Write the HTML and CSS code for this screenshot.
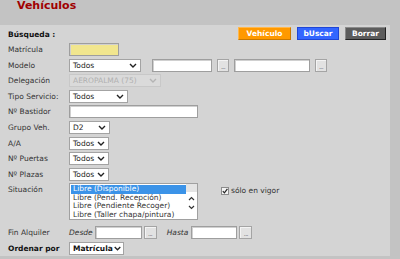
FILE: index.html
```html
<!DOCTYPE html>
<html lang="es">
<head>
<meta charset="UTF-8">
<meta name="viewport" content="width=device-width, initial-scale=1.0">
<title>Vehículos</title>
<link rel="stylesheet" href="styles.css">
</head>
<body>
  <h1>Vehículos</h1>
  <div class="panel">
    <div class="head">
      <span class="section">Búsqueda :</span>
      <div class="actions">
        <button class="btn btn-orange">Vehículo</button>
        <button class="btn btn-blue">bUscar</button>
        <button class="btn btn-dark">Borrar</button>
      </div>
    </div>

    <div class="form">
      <label>Matrícula</label>
      <div class="field"><input type="text" class="txt txt-yellow w-mat"></div>

      <label>Modelo</label>
      <div class="field">
        <span class="sel w-modelo"><span class="val">Todos</span><svg width="8" height="5" viewBox="0 0 8 5"><path d="M1 1 L4 4 L7 1" fill="none" stroke="#222" stroke-width="1.4"/></svg></span>
        <input type="text" class="txt w-m1 gap-l">
        <button class="dots">...</button>
        <input type="text" class="txt w-m2">
        <button class="dots">...</button>
      </div>

      <label>Delegación</label>
      <div class="field">
        <span class="sel off w-deleg"><span class="val">AEROPALMA (75)</span><svg width="8" height="5" viewBox="0 0 8 5"><path d="M1 1 L4 4 L7 1" fill="none" stroke="#b4b4b4" stroke-width="1.4"/></svg></span>
      </div>

      <label>Tipo Servicio:</label>
      <div class="field">
        <span class="sel w-tipo"><span class="val">Todos</span><svg width="8" height="5" viewBox="0 0 8 5"><path d="M1 1 L4 4 L7 1" fill="none" stroke="#222" stroke-width="1.4"/></svg></span>
      </div>

      <label>Nº Bastidor</label>
      <div class="field"><input type="text" class="txt w-bast"></div>

      <label>Grupo Veh.</label>
      <div class="field">
        <span class="sel w-grupo"><span class="val">D2</span><svg width="8" height="5" viewBox="0 0 8 5"><path d="M1 1 L4 4 L7 1" fill="none" stroke="#222" stroke-width="1.4"/></svg></span>
      </div>

      <label>A/A</label>
      <div class="field">
        <span class="sel w-small"><span class="val">Todos</span><svg width="8" height="5" viewBox="0 0 8 5"><path d="M1 1 L4 4 L7 1" fill="none" stroke="#222" stroke-width="1.4"/></svg></span>
      </div>

      <label>Nº Puertas</label>
      <div class="field">
        <span class="sel w-small"><span class="val">Todos</span><svg width="8" height="5" viewBox="0 0 8 5"><path d="M1 1 L4 4 L7 1" fill="none" stroke="#222" stroke-width="1.4"/></svg></span>
      </div>

      <label>Nº Plazas</label>
      <div class="field">
        <span class="sel w-small"><span class="val">Todos</span><svg width="8" height="5" viewBox="0 0 8 5"><path d="M1 1 L4 4 L7 1" fill="none" stroke="#222" stroke-width="1.4"/></svg></span>
      </div>

      <label class="top">Situación</label>
      <div class="field tall">
        <div class="list">
          <ul>
            <li class="on">Libre (Disponible)</li>
            <li>Libre (Pend. Recepción)</li>
            <li>Libre (Pendiente Recoger)</li>
            <li>Libre (Taller chapa/pintura)</li>
          </ul>
          <div class="scroll">
            <span class="thumb"></span>
            <svg width="7" height="5" viewBox="0 0 7 5"><path d="M1 4 L3.5 1.5 L6 4" fill="none" stroke="#333" stroke-width="1.2"/></svg>
            <svg width="7" height="5" viewBox="0 0 7 5"><path d="M1 1 L3.5 3.5 L6 1" fill="none" stroke="#333" stroke-width="1.2"/></svg>
          </div>
        </div>
        <label class="chk"><span class="box"><svg width="6" height="6" viewBox="0 0 6 6"><path d="M0.8 3.2 L2.4 4.8 L5.4 0.8" fill="none" stroke="#222" stroke-width="1.2"/></svg></span>sólo en vigor</label>
      </div>

      <label>Fin Alquiler</label>
      <div class="field">
        <em class="desde">Desde</em>
        <input type="text" class="txt w-date">
        <button class="dots dots-date">...</button>
        <em class="hasta">Hasta</em>
        <input type="text" class="txt w-date2">
        <button class="dots dots-date">...</button>
      </div>

      <label class="strong">Ordenar por</label>
      <div class="field">
        <span class="sel w-orden"><span class="val bold">Matrícula</span><svg width="7" height="5" viewBox="0 0 7 5"><path d="M0.7 1 L3.5 3.8 L6.3 1" fill="none" stroke="#222" stroke-width="1.3"/></svg></span>
      </div>
    </div>
  </div>
</body>
</html>
```

FILE: styles.css
```css
body {
  margin: 0;
  background-color: #c3c3c3;
  font-family: "DejaVu Sans", Verdana, sans-serif;
  font-size: 7.5px;
  color: #333;
}
h1 {
  margin: 0;
  height: 25px;
  padding-left: 17px;
  font-size: 11px;
  line-height: 11px;
  color: #a00000;
}
.panel {
  width: 390px;
  height: 231px;
  box-sizing: border-box;
  background-color: #d4d4d4;
  padding: 2px 4px 0 8px;
}
.head {
  display: flex;
  justify-content: space-between;
  align-items: center;
  height: 13px;
}
.section {
  font-weight: bold;
  color: #111;
  padding-top: 2px;
}
.actions {
  display: flex;
  gap: 6px;
}
.btn {
  height: 13px;
  padding: 0;
  font-family: "DejaVu Sans", Verdana, sans-serif;
  font-size: 7.5px;
  font-weight: bold;
  color: #fff;
  border: 1px solid;
  cursor: pointer;
}
.btn-orange {
  width: 53px;
  background-color: #ff9900;
  border-color: #ffb84d #c97800 #c97800 #ffb84d;
}
.btn-blue {
  width: 42px;
  background-color: #3366ff;
  border-color: #1f45d6;
}
.btn-dark {
  width: 41px;
  background-color: #5c5c5c;
  border-color: #8a8a8a #222 #222 #8a8a8a;
}

.form {
  display: grid;
  grid-template-columns: 61px auto;
  row-gap: 2.6px;
  align-items: center;
  margin-top: 3px;
}
.form label {
  color: #333;
}
.form label.top {
  align-self: start;
  padding-top: 2px;
}
.form label.strong {
  font-weight: bold;
  color: #111;
}
.field {
  display: flex;
  align-items: center;
  height: 13px;
}
.field.tall {
  height: 37px;
  align-items: flex-start;
  margin-bottom: 3px;
}

/* text inputs */
.txt {
  height: 13px;
  box-sizing: border-box;
  margin: 0;
  padding: 0 2px;
  border: 1px solid #9e9e9e;
  box-shadow: inset 1px 1px 0 #d0d0d0;
  background-color: #fff;
  font-family: inherit;
  font-size: 7.5px;
}
.txt-yellow {
  background-color: #f1e68e;
}
.w-mat { width: 50px; }
.w-m1 { width: 60px; }
.w-m2 { width: 76px; }
.w-bast { width: 129px; }
.w-date { width: 47px; }
.w-date2 { width: 46px; }
.gap-l { margin-left: 11px; }

.dots {
  width: 12px;
  height: 13px;
  box-sizing: border-box;
  margin: 0 5px;
  padding: 3px 0 0;
  border: 1px solid #a4a4a4;
  box-shadow: inset 1px 1px 0 #f4f4f4;
  background-color: #e2e2e2;
  font-family: inherit;
  font-size: 6px;
  line-height: 6px;
  color: #556;
  letter-spacing: -0.5px;
}
.dots:last-child {
  margin-right: 0;
}
.dots-date {
  width: 13px;
  margin: 0 0 0 2px;
}

/* selects */
.sel {
  display: inline-flex;
  align-items: center;
  justify-content: space-between;
  height: 13px;
  box-sizing: border-box;
  padding: 0 3px 0 3px;
  background-color: #fff;
  border: 1px solid #a3a3a3;
  white-space: nowrap;
}
.sel svg {
  flex-shrink: 0;
}
.val {
  color: #222;
}
.val.bold {
  font-weight: bold;
  color: #111;
}
.sel.off {
  background-color: #dadada;
  border-color: #c8c8c8;
}
.sel.off .val {
  color: #b0b0b0;
}
.w-modelo { width: 72px; }
.w-deleg { width: 92px; }
.w-tipo { width: 59px; }
.w-grupo { width: 41px; }
.w-small { width: 40px; }
.w-orden { width: 55px; padding-right: 2px; }

/* listbox */
.list {
  display: flex;
  width: 129px;
  height: 37px;
  box-sizing: border-box;
  border: 1px solid #a0a0a0;
  background-color: #fff;
}
.list ul {
  flex: 1;
  margin: 0;
  padding: 1px 0 0 1px;
  list-style: none;
}
.list li {
  height: 8.5px;
  line-height: 8.5px;
  padding-left: 2px;
  color: #333;
  white-space: nowrap;
}
.list li.on {
  background-color: #3b93e8;
  color: #fff;
}
.scroll {
  width: 11px;
  display: flex;
  flex-direction: column;
  align-items: center;
  gap: 4px;
}
.thumb {
  width: 11px;
  height: 8px;
  background-color: #e4e4e4;
}

.chk {
  display: inline-flex;
  align-items: center;
  gap: 2px;
  margin: 3px 0 0 23px;
}
.box {
  display: inline-flex;
  align-items: center;
  justify-content: center;
  width: 8px;
  height: 8px;
  box-sizing: border-box;
  border: 1px solid #8c8c8c;
  background-color: #f4f4f4;
}

.desde, .hasta {
  color: #333;
}
.desde {
  margin-right: 2px;
}
.hasta {
  margin: 0 3px 0 10px;
}
```
